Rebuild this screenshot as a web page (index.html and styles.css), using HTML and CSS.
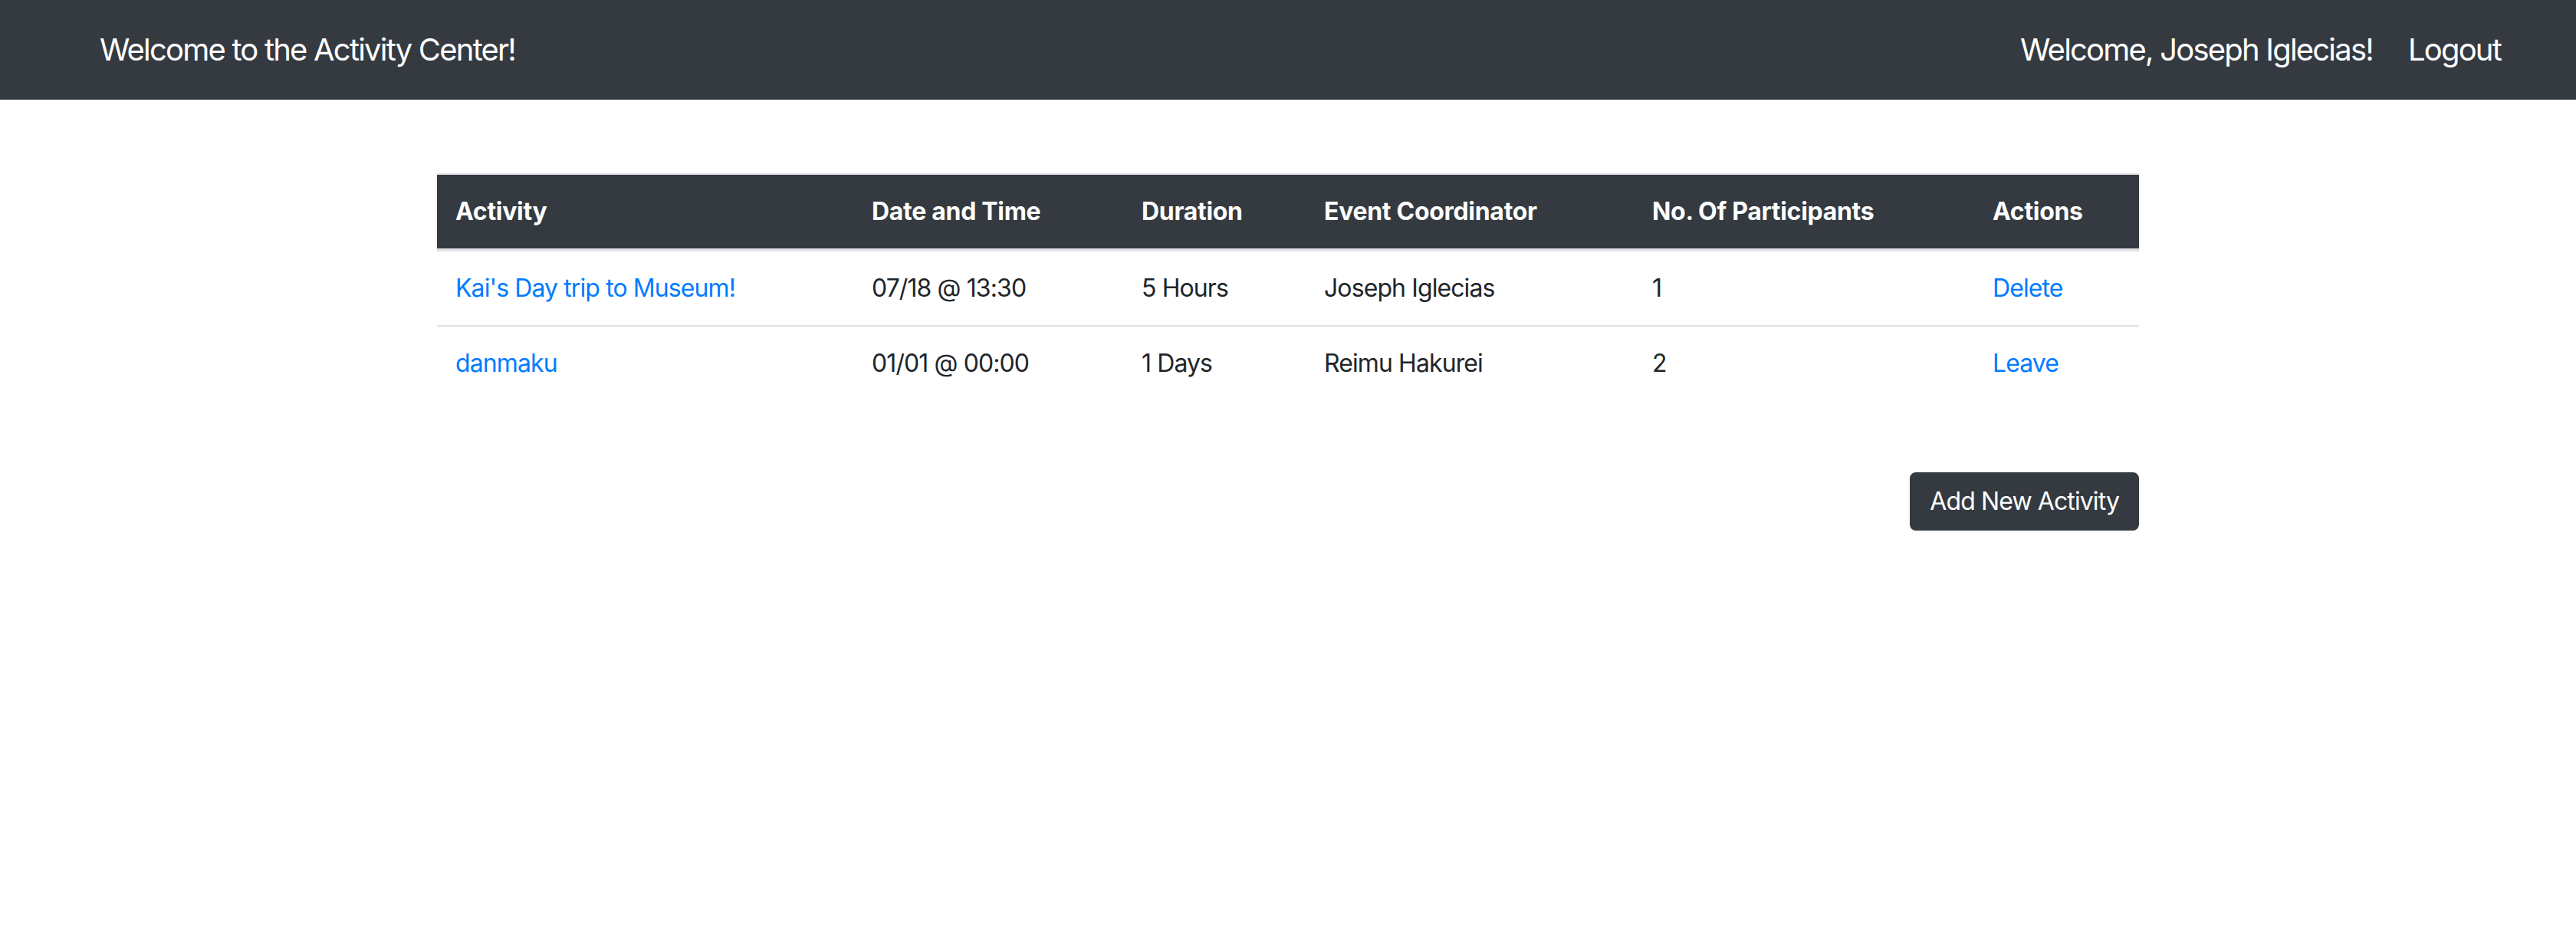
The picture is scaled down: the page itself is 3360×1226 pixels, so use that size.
FILE: index.html
```html
<!DOCTYPE html>
<html lang="en">
<head>
<meta charset="utf-8">
<title>Activity Center</title>
<link rel="stylesheet" href="styles.css">
</head>
<body>
<nav class="navbar">
  <span class="brand">Welcome to the Activity Center!</span>
  <div class="nav-right">
    <span class="nav-item">Welcome, Joseph Iglecias!</span>
    <a class="nav-item" href="#">Logout</a>
  </div>
</nav>
<main class="container">
  <table class="table">
    <thead>
      <tr>
        <th class="col-activity">Activity</th>
        <th class="col-date">Date and Time</th>
        <th class="col-duration">Duration</th>
        <th class="col-coord">Event Coordinator</th>
        <th class="col-count">No. Of Participants</th>
        <th class="col-actions">Actions</th>
      </tr>
    </thead>
    <tbody>
      <tr>
        <td><a href="#">Kai's Day trip to Museum!</a></td>
        <td>07/18 @ 13:30</td>
        <td>5 Hours</td>
        <td>Joseph Iglecias</td>
        <td>1</td>
        <td><a href="#">Delete</a></td>
      </tr>
      <tr>
        <td><a href="#">danmaku</a></td>
        <td>01/01 @ 00:00</td>
        <td>1 Days</td>
        <td>Reimu Hakurei</td>
        <td>2</td>
        <td><a href="#">Leave</a></td>
      </tr>
    </tbody>
  </table>
  <div class="actions-row">
    <button class="btn" type="button">Add New Activity</button>
  </div>
</main>
</body>
</html>
```
FILE: styles.css
```css
html, body {
  margin: 0;
  padding: 0;
  background: #fff;
}
body {
  font-family: Inter, "Noto Sans", "Liberation Sans", sans-serif;
  color: #212529;
  font-size: 32px;
  line-height: 1.5;
  letter-spacing: -0.9px;
}
a {
  color: #007bff;
  text-decoration: none;
}
.navbar {
  display: flex;
  align-items: center;
  justify-content: space-between;
  box-sizing: border-box;
  height: 130px;
  padding: 0 98px 0 130px;
  background: #343a40;
  color: #fff;
  font-size: 40px;
  line-height: 60px;
  letter-spacing: -1.8px;
}
.nav-right {
  display: flex;
  align-items: center;
  gap: 46px;
}
.nav-item {
  color: #fff;
}
.container {
  width: 2220px;
  margin: 96px auto 0;
}
.table {
  width: 2220px;
  border-collapse: collapse;
  table-layout: fixed;
}
.table th,
.table td {
  padding: 24px;
  text-align: left;
  vertical-align: top;
  line-height: 48px;
  white-space: nowrap;
}
.table th {
  background: #343a40;
  color: #fff;
  font-weight: 700;
  letter-spacing: -0.3px;
  border-top: 2px solid #dee2e6;
  border-bottom: 4px solid #dee2e6;
}
.table td {
  border-top: 2px solid #dee2e6;
}
.col-activity { width: 495px; }
.col-date { width: 304px; }
.col-duration { width: 190px; }
.col-coord { width: 380px; }
.col-count { width: 396px; }
.col-actions { width: 167px; }
.actions-row {
  display: flex;
  justify-content: flex-end;
  margin-top: 94px;
}
.btn {
  font-family: inherit;
  font-size: 32px;
  line-height: 48px;
  letter-spacing: -0.9px;
  padding: 12px 24px;
  color: #fff;
  background: #343a40;
  border: 2px solid #343a40;
  border-radius: 8px;
}
```
